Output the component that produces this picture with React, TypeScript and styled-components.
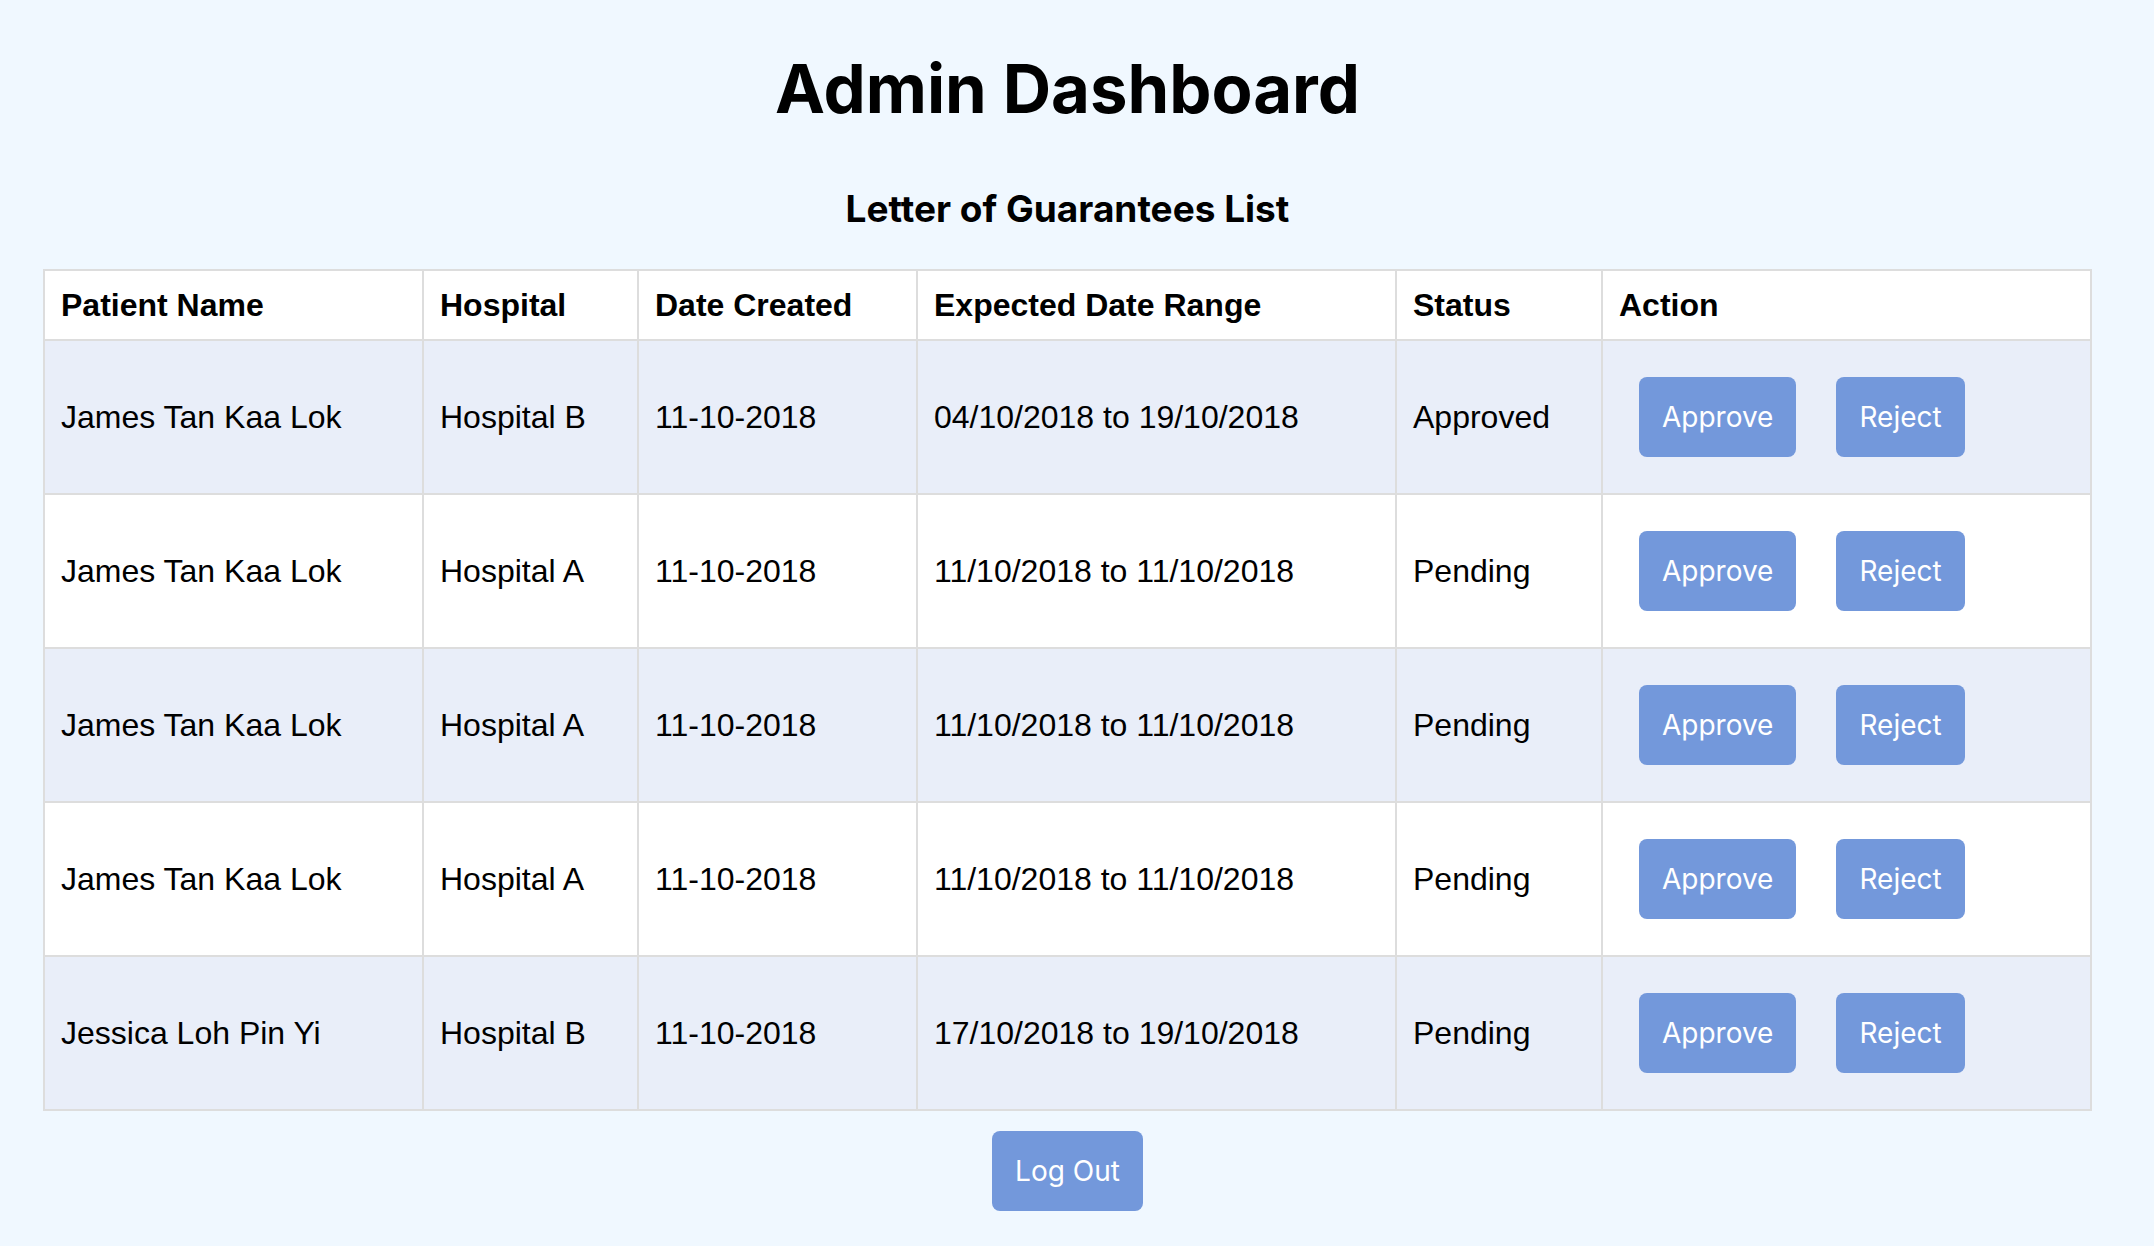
import styled, { createGlobalStyle } from "styled-components";

const GlobalStyle = createGlobalStyle`
  html, body {
    margin: 0;
    padding: 0;
    background: #f0f8ff;
  }
`;

type Letter = {
  id: number;
  patient: string;
  hospital: string;
  created: string;
  range: string;
  status: string;
};

const letters: Letter[] = [
  { id: 1, patient: "James Tan Kaa Lok", hospital: "Hospital B", created: "11-10-2018", range: "04/10/2018 to 19/10/2018", status: "Approved" },
  { id: 2, patient: "James Tan Kaa Lok", hospital: "Hospital A", created: "11-10-2018", range: "11/10/2018 to 11/10/2018", status: "Pending" },
  { id: 3, patient: "James Tan Kaa Lok", hospital: "Hospital A", created: "11-10-2018", range: "11/10/2018 to 11/10/2018", status: "Pending" },
  { id: 4, patient: "James Tan Kaa Lok", hospital: "Hospital A", created: "11-10-2018", range: "11/10/2018 to 11/10/2018", status: "Pending" },
  { id: 5, patient: "Jessica Loh Pin Yi", hospital: "Hospital B", created: "11-10-2018", range: "17/10/2018 to 19/10/2018", status: "Pending" },
];

const columns = [
  { label: "Patient Name", width: 379 },
  { label: "Hospital", width: 215 },
  { label: "Date Created", width: 279 },
  { label: "Expected Date Range", width: 479 },
  { label: "Status", width: 206 },
  { label: "Action", width: 489 },
];

const AdminDashboard = () => {
  return (
    <StPage>
      <GlobalStyle />
      <StTitle>Admin Dashboard</StTitle>
      <StSubTitle>Letter of Guarantees List</StSubTitle>
      <StTable>
        <colgroup>
          {columns.map((c) => (
            <col key={c.label} style={{ width: c.width }} />
          ))}
        </colgroup>
        <thead>
          <tr>
            {columns.map((c) => (
              <StHeadCell key={c.label}>{c.label}</StHeadCell>
            ))}
          </tr>
        </thead>
        <tbody>
          {letters.map((l, i) => (
            <StRow key={l.id} $striped={i % 2 === 0}>
              <StCell>{l.patient}</StCell>
              <StCell>{l.hospital}</StCell>
              <StCell>{l.created}</StCell>
              <StCell>{l.range}</StCell>
              <StCell>{l.status}</StCell>
              <StCell>
                <StButton>Approve</StButton>
                <StButton>Reject</StButton>
              </StCell>
            </StRow>
          ))}
        </tbody>
      </StTable>
      <StFooter>
        <StButton>Log Out</StButton>
      </StFooter>
    </StPage>
  );
};

export default AdminDashboard;

const StPage = styled.div`
  display: flex;
  flex-direction: column;
  align-items: center;
  padding: 48px 63px 0 44px;
  min-height: 100vh;
  box-sizing: border-box;
  background: #f0f8ff;
`;

const StTitle = styled.h1`
  margin: 0;
  font-family: Inter, "Liberation Sans", sans-serif;
  font-size: 67px;
  font-weight: 700;
  line-height: normal;
  color: #000;
`;

const StSubTitle = styled.h2`
  margin: 57px 0 0;
  font-family: Inter, "Liberation Sans", sans-serif;
  font-size: 37px;
  font-weight: 700;
  line-height: normal;
  color: #000;
`;

const StTable = styled.table`
  margin-top: 38px;
  width: 2047px;
  table-layout: fixed;
  border-collapse: collapse;
  font-family: "Liberation Sans", Arial, sans-serif;
  font-size: 32px;
  color: #000;
`;

const StHeadCell = styled.th`
  background: #fff;
  border: 2px solid #ddd;
  padding: 16px 16px 15px;
  text-align: left;
  font-weight: 700;
`;

const StRow = styled.tr<{ $striped: boolean }>`
  background: ${(p) => (p.$striped ? "#e9eef9" : "#ffffff")};
`;

const StCell = styled.td`
  border: 2px solid #ddd;
  padding: 16px;
  text-align: left;
  vertical-align: middle;
  white-space: nowrap;
`;

const StButton = styled.button`
  margin: 20px;
  height: 80px;
  padding: 0 23px;
  border: none;
  border-radius: 8px;
  background: #7398db;
  color: #fff;
  font-family: Inter, "Liberation Sans", sans-serif;
  font-size: 28px;
  cursor: pointer;
  vertical-align: middle;
`;

const StFooter = styled.div`
  display: flex;
  justify-content: center;
`;
